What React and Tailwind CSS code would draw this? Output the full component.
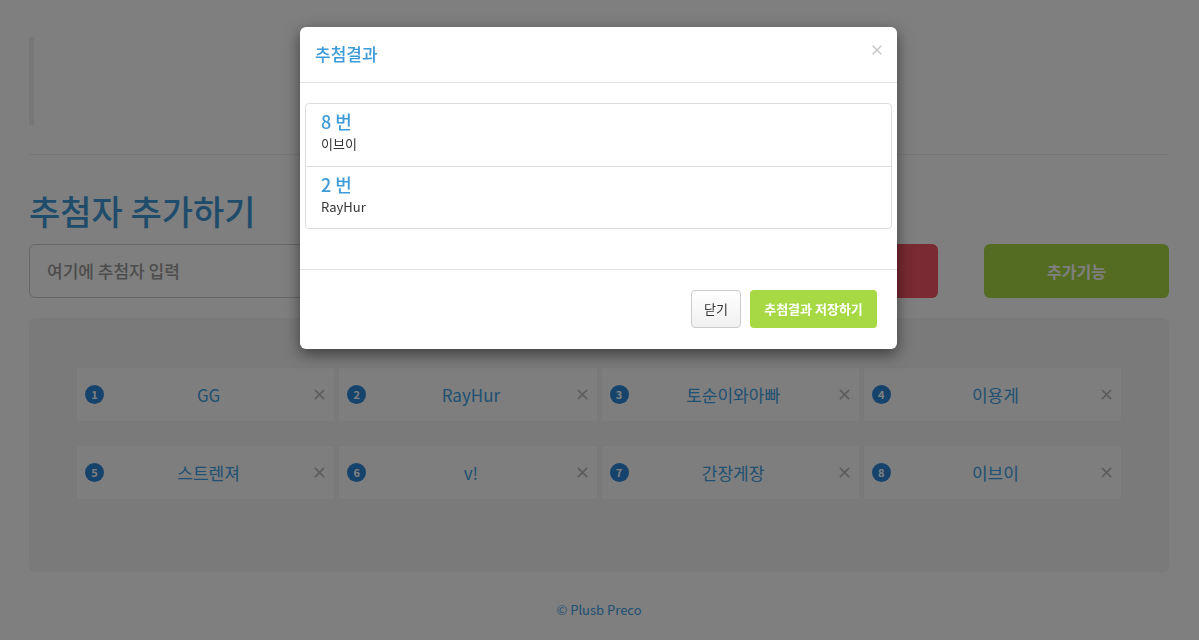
import { useState } from "react";

const entries = ["GG", "RayHur", "토순이와아빠", "이용게", "스트렌져", "v!", "간장게장", "이브이"];
const picked = [
  { no: 8, name: "이브이" },
  { no: 2, name: "RayHur" },
];

function XIcon({ className }) {
  return (
    <svg viewBox="0 0 14 14" className={className} fill="none" stroke="currentColor" strokeWidth="1.8">
      <path d="M2 2 L12 12 M12 2 L2 12" />
    </svg>
  );
}

function EntryCard({ no, name }) {
  return (
    <div className="h-[55px] bg-[#fcfcfc] border border-[#f3f3f3] flex items-center pl-[8px] pr-[8px]">
      <span className="w-[19px] h-[19px] rounded-full bg-[#2a86d8] text-white text-[11px] font-bold flex items-center justify-center">
        {no}
      </span>
      <span className="flex-1 text-center text-[17px] text-[#40a0e4]">{name}</span>
      <XIcon className="w-[13px] h-[13px] text-[#bbb]" />
    </div>
  );
}

function ResultModal() {
  return (
    <div className="absolute left-[300px] top-[27px] w-[597px] bg-white rounded-[6px] shadow-[0_5px_15px_rgba(0,0,0,0.5)]">
      <div className="h-[56px] px-[15px] flex items-center justify-between border-b border-[#e5e5e5]">
        <h4 className="text-[17px] font-medium text-[#3d9bd8] -mt-[2px]">추첨결과</h4>
        <XIcon className="w-[12px] h-[12px] text-[#c8c8c8] -mr-[1px] -mt-[10px]" />
      </div>
      <div className="px-[5px] pt-[20px] pb-[20px] border-b border-[#e5e5e5]">
        <div className="border border-[#ddd] rounded-[4px] mb-[20px]">
          {picked.map((p, i) => (
            <div
              key={p.no}
              className={`h-[62px] px-[15px] pt-[5px] ${i > 0 ? "border-t border-[#ddd]" : ""}`}
            >
              <div className="text-[18px] leading-[24px] font-medium text-[#3d9bd8]">{p.no} 번</div>
              <div className="text-[13px] leading-[22px] text-[#333]">{p.name}</div>
            </div>
          ))}
        </div>
      </div>
      <div className="px-[20px] pt-[20px] pb-[21px] flex justify-end gap-[9px]">
        <button className="h-[38px] w-[50px] rounded-[4px] border border-[#ccc] bg-gradient-to-b from-white to-[#f0f0f0] text-[13px] text-[#333]">
          닫기
        </button>
        <button className="h-[38px] w-[127px] rounded-[4px] bg-[#a6d944] text-[13px] font-bold text-white">
          추첨결과 저장하기
        </button>
      </div>
    </div>
  );
}

export default function App() {
  const [open] = useState(true);
  return (
    <div
      className="relative min-h-screen bg-white"
      style={{ fontFamily: '"Noto Sans CJK KR", "Noto Sans", sans-serif' }}
    >
      <div className="ml-[29px] w-[1140px] pt-[37px] pb-[22px]">
        <blockquote className="h-[88px] border-l-[5px] border-[#eeeeee]"></blockquote>
        <hr className="mt-[29px] border-t border-[#eeeeee]" />
        <h1 className="mt-[36px] text-[34px] leading-[40px] font-medium text-[#4098d8]">추첨자 추가하기</h1>
        <div className="mt-[13px] flex h-[54px]">
          <div className="flex-1 rounded-[6px] border border-[#ccc] flex items-center px-[17px] text-[17px] font-medium text-[#999]">
            여기에 추첨자 입력
          </div>
          <button className="ml-[46px] w-[185px] rounded-[6px] bg-[#f25565] text-white text-[16px] font-bold">
            추첨하기
          </button>
          <button className="ml-[46px] w-[185px] rounded-[6px] bg-[#a6d944] text-white text-[16px] font-bold">
            추가기능
          </button>
        </div>
        <div className="mt-[20px] h-[254px] rounded-[6px] bg-[#f5f5f5] px-[47px] pt-[49px]">
          <div className="grid grid-cols-4 gap-x-[3px] gap-y-[23px]">
            {entries.map((n, i) => (
              <EntryCard key={i} no={i + 1} name={n} />
            ))}
          </div>
        </div>
        <p className="mt-[28px] text-center text-[13px] text-[#40a0e4]">© Plusb Preco</p>
      </div>
      {open && (
        <>
          <div className="fixed inset-0 bg-black/50"></div>
          <ResultModal />
        </>
      )}
    </div>
  );
}
